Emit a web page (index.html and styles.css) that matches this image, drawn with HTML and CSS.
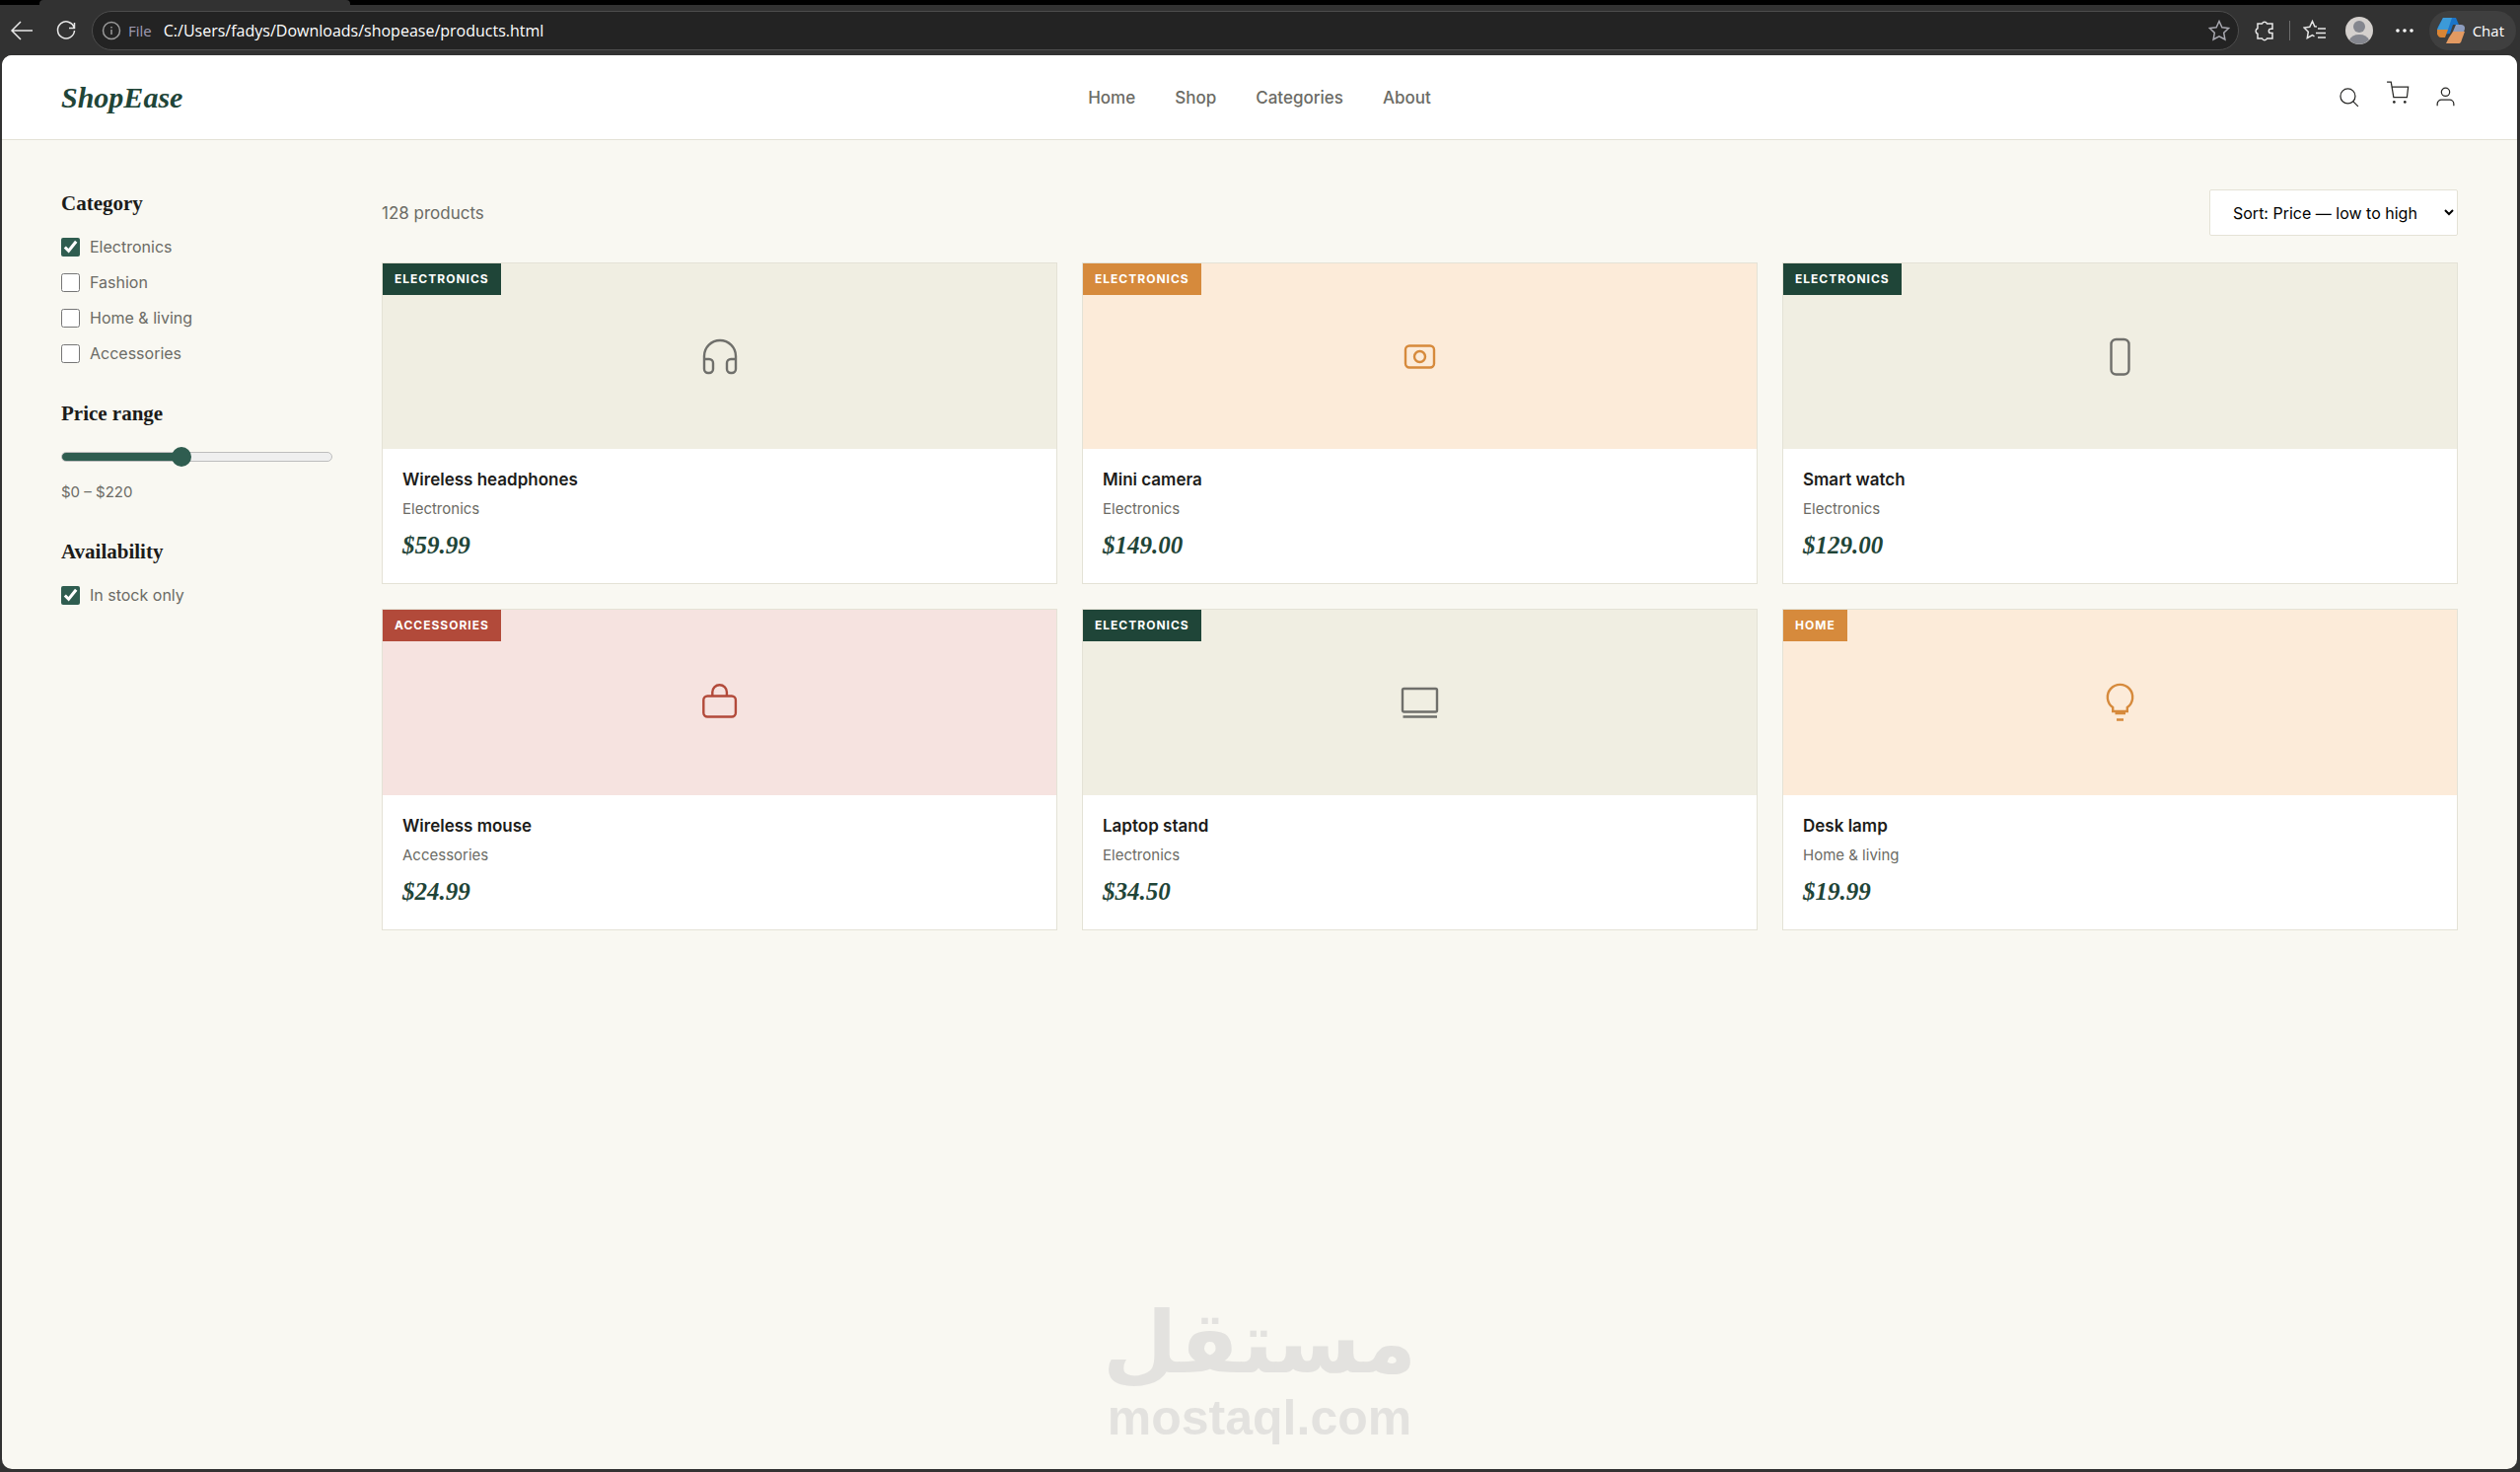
FILE: index.html
```html
<!DOCTYPE html>
<html lang="en">
<head>
<meta charset="utf-8">
<meta name="viewport" content="width=device-width, initial-scale=1">
<title>ShopEase – Products</title>
<link rel="stylesheet" href="styles.css">
</head>
<body>
<div class="browser">
  <div class="tabstrip"><div class="tab"></div></div>
  <div class="toolbar">
    <button class="tool" aria-label="Back"><svg width="24" height="24" viewBox="0 0 24 24"><path d="M23 12H2M11 3L2 12l9 9"/></svg></button>
    <button class="tool reload" aria-label="Reload"><svg width="24" height="24" viewBox="0 0 24 24"><path d="M20.300 9.500A8.500 8.500 0 1 0 20.500 12M20.500 4v5.500H15"/></svg></button>
    <div class="address">
      <svg class="info" width="20" height="20" viewBox="0 0 20 20"><circle cx="10" cy="10" r="8.500"/><path d="M10 9v5M10 6v1.500"/></svg>
      <span class="scheme">File</span>
      <input class="url" type="text" aria-label="Address" value="C:/Users/fadys/Downloads/shopease/products.html">
      <button class="tool star" aria-label="Add to favorites"><svg width="24" height="24" viewBox="0 0 24 24"><path d="M12 2.500l2.900 6.200 6.700.9-4.900 4.700 1.200 6.700-5.900-3.200L6.100 21l1.200-6.700L2.400 9.600l6.700-.9z"/></svg></button>
    </div>
    <div class="extras">
      <button class="tool" aria-label="Extensions"><svg width="24" height="24" viewBox="0 0 24 24"><path d="M5 5h4.500a2.700 2.700 0 0 1 5 0H20v5.200h-1.500a2.200 2.200 0 0 0 0 4.400H20V20h-5.500a2.700 2.700 0 0 1-5 0H5v-4.800a2.900 2.900 0 0 1 0-5.400z"/></svg></button>
      <span class="divider"></span>
      <button class="tool" aria-label="Favorites"><svg width="24" height="24" viewBox="0 0 24 24"><path d="M14 8l-2.200-.3L9.500 2.500 6.800 8.200l-5.800.8 4.300 4.200-1 6.300 5.200-2.900 2 1.200M15 10h8M13 14.500h10M15 19h8"/></svg></button>
      <button class="tool profile" aria-label="Profile"><svg width="28" height="28" viewBox="0 0 28 28"><circle class="avatar-bg" cx="14" cy="14" r="14"/><circle class="avatar" cx="14" cy="10" r="6"/><path class="avatar" d="M4 23.500a10.500 8 0 0 1 20 0A14 14 0 0 1 4 23.500z"/></svg></button>
      <button class="tool" aria-label="Settings and more"><svg width="18" height="24" viewBox="0 0 18 24"><g class="dots"><circle cx="2" cy="12" r="1.800"/><circle cx="9" cy="12" r="1.800"/><circle cx="16" cy="12" r="1.800"/></g></svg></button>
    </div>
    <button class="chat">
      <svg width="28" height="28" viewBox="0 0 28 28"><path fill="#1b74c9" d="M6 1h13l3 7h-6l-3 9-7 1c-5 0-7-3-5-8z"/><path fill="#3c9ad8" d="M6 1h9l-4 12H0z"/><path fill="#d98535" d="M0 13h11l-3 8H4c-3 0-5-4-4-8z"/><path fill="#8d9dbf" d="M19 8h5c4 0 5 3 3 7H16z"/><path fill="#e39a62" d="M16 15h12l-4 11c-1 1-2 1-3 1H9l3-6z"/></svg>
      Chat
    </button>
  </div>

  <div class="page">
    <header class="site-header">
      <a class="logo" href="#">ShopEase</a>
      <nav class="nav">
        <a href="#">Home</a><a href="#">Shop</a><a href="#">Categories</a><a href="#">About</a>
      </nav>
      <div class="actions">
        <button class="action" aria-label="Search"><svg width="25" height="25" viewBox="0 0 24 24"><circle cx="11" cy="11" r="7.200"/><path d="M16 16l5 5"/></svg></button>
        <button class="action cart" aria-label="Cart"><svg width="25" height="25" viewBox="0 0 24 24"><path d="M2 2h4l2.500 15h13l1.200-10.200H6.700"/><circle class="wheel" cx="9" cy="21.500" r="1.300"/><circle class="wheel" cx="19.500" cy="21.500" r="1.300"/></svg></button>
        <button class="action" aria-label="Account"><svg width="25" height="25" viewBox="0 0 24 24"><circle cx="12" cy="7" r="4"/><path d="M4 20.500v-2a4 4 0 0 1 4-4h8a4 4 0 0 1 4 4v2"/></svg></button>
      </div>
    </header>

    <div class="content">
      <aside class="filters">
        <section class="filter">
          <h2>Category</h2>
          <label><input type="checkbox" checked>Electronics</label>
          <label><input type="checkbox">Fashion</label>
          <label><input type="checkbox">Home &amp; living</label>
          <label><input type="checkbox">Accessories</label>
        </section>
        <section class="filter">
          <h2 id="price-title">Price range</h2>
          <input class="range" type="range" min="0" max="500" value="220" aria-labelledby="price-title">
          <p class="range-text">$0 – $220</p>
        </section>
        <section class="filter">
          <h2>Availability</h2>
          <label><input type="checkbox" checked>In stock only</label>
        </section>
      </aside>

      <main class="results">
        <div class="results-bar">
          <p class="count">128 products</p>
          <select class="sort" aria-label="Sort products">
            <option>Sort: Price — low to high</option>
            <option>Sort: Price — high to low</option>
          </select>
        </div>
        <div class="grid">
          <article class="card">
            <div class="thumb"><span class="badge">Electronics</span>
              <svg width="40" height="40" viewBox="0 0 40 40"><path d="M4 32V20a16 16 0 0 1 32 0v12M4 23h5a4 4 0 0 1 4 4v6a4 4 0 0 1-4 4H8a4 4 0 0 1-4-4zM36 23h-5a4 4 0 0 0-4 4v6a4 4 0 0 0 4 4h1a4 4 0 0 0 4-4z"/></svg></div>
            <div class="info-box"><h3>Wireless headphones</h3><p class="kind">Electronics</p><p class="price">$59.99</p></div>
          </article>
          <article class="card amber">
            <div class="thumb"><span class="badge">Electronics</span>
              <svg width="40" height="40" viewBox="0 0 40 40"><rect x="5" y="9.500" width="29" height="22" rx="4"/><circle cx="19.500" cy="20.500" r="5.500"/></svg></div>
            <div class="info-box"><h3>Mini camera</h3><p class="kind">Electronics</p><p class="price">$149.00</p></div>
          </article>
          <article class="card">
            <div class="thumb"><span class="badge">Electronics</span>
              <svg width="40" height="40" viewBox="0 0 40 40"><rect x="10.500" y="3" width="18" height="35.500" rx="5"/></svg></div>
            <div class="info-box"><h3>Smart watch</h3><p class="kind">Electronics</p><p class="price">$129.00</p></div>
          </article>
          <article class="card red">
            <div class="thumb"><span class="badge">Accessories</span>
              <svg width="40" height="40" viewBox="0 0 40 40"><rect x="3.300" y="13.500" width="32.600" height="21" rx="4"/><path d="M12.300 13.500v-4a7.300 7.300 0 0 1 14.600 0v4"/></svg></div>
            <div class="info-box"><h3>Wireless mouse</h3><p class="kind">Accessories</p><p class="price">$24.99</p></div>
          </article>
          <article class="card">
            <div class="thumb"><span class="badge">Electronics</span>
              <svg width="40" height="40" viewBox="0 0 40 40"><rect x="2" y="6" width="35" height="23.500" rx="1.500"/><path d="M2.500 34.500H37"/></svg></div>
            <div class="info-box"><h3>Laptop stand</h3><p class="kind">Electronics</p><p class="price">$34.50</p></div>
          </article>
          <article class="card amber">
            <div class="thumb"><span class="badge">Home</span>
              <svg width="40" height="40" viewBox="0 0 40 40"><path d="M12.200 29v-4a12.700 12.700 0 1 1 14.600 0v4zM14.500 31H25M16 37.500h7"/></svg></div>
            <div class="info-box"><h3>Desk lamp</h3><p class="kind">Home &amp; living</p><p class="price">$19.99</p></div>
          </article>
        </div>
      </main>
    </div>
    <div class="watermark">
      <span class="mark-ar" lang="ar" dir="rtl">مستقل</span>
      <span class="mark-en">mostaql.com</span>
    </div>
  </div>
</div>
</body>
</html>
```
FILE: styles.css
```css
:root {
  --chrome: #323232;
  --cream: #f9f8f2;
  --line: #e4e2d6;
  --ink: #1c1c1a;
  --muted: #6b6b65;
  --green: #1f4538;
  --accent: #2f5d50;
  --amber: #d68a3c;
  --red: #b24a3a;
}

* { box-sizing: border-box; }

body {
  margin: 0;
  background: var(--chrome);
  color: var(--ink);
  font-family: Inter, "Liberation Sans", sans-serif;
}

h2, h3, p { margin: 0; }
a { color: inherit; text-decoration: none; }
button { padding: 0; border: 0; background: none; color: inherit; font: inherit; }
svg { display: block; fill: none; }

/* Browser frame */
.browser { display: flex; flex-direction: column; min-height: 100vh; }
.tabstrip { height: 5px; background: #000; padding-left: 40px; }
.tab { width: 315px; height: 5px; background: var(--chrome); border-radius: 4px 4px 0 0; }
.toolbar {
  display: flex;
  align-items: center;
  height: 51px;
  padding: 0 4px 0 10px;
  color: #fff;
  font-family: "Open Sans", "Noto Sans", sans-serif;
}
.tool svg { stroke: #e8e8e8; stroke-width: 1.500; }
.reload { margin: 0 14px 0 21px; }
.address {
  flex: 1;
  display: flex;
  align-items: center;
  height: 40px;
  padding: 0 7px 0 9px;
  border: 1px solid #4d4d4d;
  border-radius: 20px;
  background: #232323;
}
.info { stroke: #9a9a9a; stroke-width: 1.500; }
.scheme { margin: 0 12px 0 7px; color: #a09cb4; font-size: 15px; }
.url { flex: 1; padding: 0; border: 0; background: none; color: #fff; font-family: inherit; font-size: 16px; }
.star svg { stroke: #a8a8b0; }
.extras { display: flex; align-items: center; gap: 13px; margin: 0 16px 0 14px; }
.profile { margin: 0 10px 0 6px; }
.divider { width: 1px; height: 20px; background: #6c6c6c; }
.avatar-bg { fill: #d4d0cd; stroke: none; }
.avatar { fill: #84868e; stroke: none; }
.dots { fill: #fff; stroke: none; }
.chat {
  display: flex;
  align-items: center;
  gap: 8px;
  height: 40px;
  padding: 0 12px 0 8px;
  border-radius: 20px;
  background: #3f3f3f;
  font-size: 15px;
}

/* Site */
.page {
  position: relative;
  flex: 1;
  margin: 0 3px 3px 2px;
  border-radius: 10px;
  background: var(--cream);
  overflow: hidden;
}
.site-header {
  display: grid;
  grid-template-columns: 1fr auto 1fr;
  align-items: center;
  height: 86px;
  padding: 0 60px;
  border-bottom: 1px solid var(--line);
  background: #fff;
}
.logo {
  color: var(--green);
  font: italic bold 30px "Liberation Serif", serif;
}
.nav { display: flex; gap: 40px; color: var(--muted); font-size: 17px; font-weight: 500; }
.actions { display: flex; justify-content: flex-end; align-items: center; gap: 24px; }
.action svg { stroke: #2a2a28; stroke-width: 1.200; }
.cart { padding-bottom: 10px; }
.action .wheel { fill: #2a2a28; stroke: none; }

.content { display: flex; gap: 50px; padding: 50px 60px 60px; }

.filters { width: 275px; }
.filter { display: flex; flex-direction: column; gap: 10px; margin-bottom: 34px; }
.filter h2 { margin-bottom: 7px; font: bold 21px/28px "Liberation Serif", serif; }
.filter label { display: flex; align-items: center; gap: 10px; color: var(--muted); font-size: 16px; line-height: 26px; }
.filter input[type="checkbox"] { width: 19px; height: 19px; margin: 0; accent-color: var(--accent); }
.range { appearance: none; width: 100%; height: 20px; margin: 3px 0 4px; background: none; }
.range::-webkit-slider-runnable-track {
  height: 10px;
  border: 1px solid #bdbdbd;
  border-radius: 5px;
  background: linear-gradient(to right, var(--accent) 44%, #efefef 44%) border-box;
}
.range::-webkit-slider-thumb {
  appearance: none;
  width: 20px;
  height: 20px;
  margin-top: -6px;
  border-radius: 50%;
  background: var(--accent);
}
.range-text { color: var(--muted); font-size: 15px; line-height: 24px; }

.results { flex: 1; }
.results-bar { display: flex; justify-content: space-between; align-items: center; margin-bottom: 27px; }
.count { color: var(--muted); font-size: 17px; }
.sort {
  width: 252px;
  height: 47px;
  padding: 0 0 0 19px;
  border: 1px solid var(--line);
  border-radius: 2px;
  background: #fff;
  color: #000;
  font-family: inherit;
  font-size: 16px;
}
.grid { display: grid; grid-template-columns: repeat(3, 1fr); gap: 25px; }
.card {
  --tone: var(--green);
  --fill: #f0eee2;
  --icon: #6f6f6b;
  border: 1px solid var(--line);
  background: #fff;
}
.card.amber { --tone: var(--amber); --fill: #fcebd9; --icon: var(--amber); }
.card.red { --tone: var(--red); --fill: #f6e3e0; --icon: var(--red); }
.thumb {
  position: relative;
  display: grid;
  place-items: center;
  height: 188px;
  background: var(--fill);
}
.thumb svg { stroke: var(--icon); stroke-width: 2.400; }
.badge {
  position: absolute;
  top: 0;
  left: 0;
  padding: 0 12px;
  background: var(--tone);
  color: #fff;
  font-size: 12px;
  font-weight: 700;
  line-height: 32px;
  letter-spacing: 1px;
  text-transform: uppercase;
}
.info-box { padding: 19px 20px 20px; }
.info-box h3 { font-size: 17px; font-weight: 600; line-height: 24px; }
.kind { margin: 6px 0; color: var(--muted); font-size: 15px; line-height: 24px; }
.price { color: var(--green); font: italic bold 25px/37px "Liberation Serif", serif; }

/* Watermark laid over the page */
.watermark {
  position: absolute;
  right: 0;
  bottom: 24px;
  left: 0;
  display: flex;
  flex-direction: column;
  align-items: center;
  color: #e3e2df;
  font-weight: bold;
  pointer-events: none;
}
.mark-ar { font-family: "DejaVu Sans", sans-serif; font-size: 87px; line-height: 96px; }
.mark-en { font-family: "Liberation Sans", sans-serif; font-size: 50px; line-height: 56px; }
```
